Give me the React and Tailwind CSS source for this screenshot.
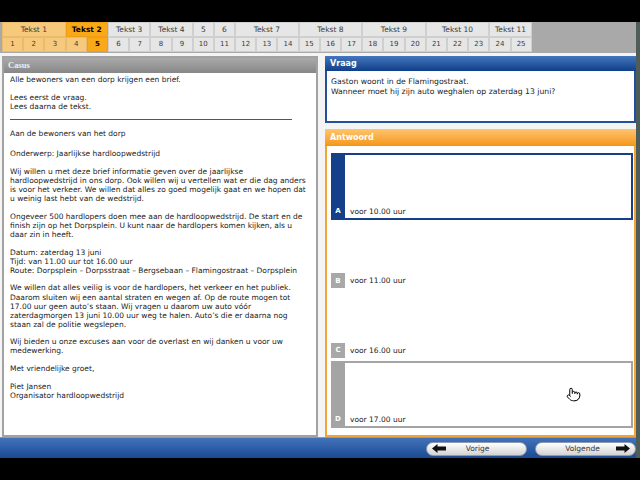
import React from "react";
import { Pointer } from "lucide-react";

const sans = "font-['DejaVu_Sans',Verdana,sans-serif]";

const groups = [
  { label: "Tekst 1", span: 3, tone: "done" },
  { label: "Tekst 2", span: 2, tone: "active" },
  { label: "Tekst 3", span: 2 },
  { label: "Tekst 4", span: 2 },
  { label: "5", span: 1 },
  { label: "6", span: 1 },
  { label: "Tekst 7", span: 3 },
  { label: "Tekst 8", span: 3 },
  { label: "Tekst 9", span: 3 },
  { label: "Tekst 10", span: 3 },
  { label: "Tekst 11", span: 2 },
];

const spans = { 1: "col-span-1", 2: "col-span-2", 3: "col-span-3" };

const tones = {
  done: "bg-[#f6c97c] border-[#e9bb6c] text-[#3a3a3a]",
  active: "bg-[#f9a81a] border-[#eea014] text-black font-bold",
  idle: "bg-[#e6e6e6] border-[#cfcfcf] text-[#3a3a3a]",
};

const numTone = (n) => (n < 5 ? "done" : n === 5 ? "active" : "idle");

// letter text, line by line as in the picture
const casus = [
  ["Alle bewoners van een dorp krijgen een brief."],
  ["Lees eerst de vraag.", "Lees daarna de tekst."],
  "hr",
  ["Aan de bewoners van het dorp"],
  ["Onderwerp: Jaarlijkse hardloopwedstrijd"],
  [
    "Wij willen u met deze brief informatie geven over de jaarlijkse",
    "hardloopwedstrijd in ons dorp. Ook willen wij u vertellen wat er die dag anders",
    "is voor het verkeer. We willen dat alles zo goed mogelijk gaat en we hopen dat",
    "u weinig last hebt van de wedstrijd.",
  ],
  [
    "Ongeveer 500 hardlopers doen mee aan de hardloopwedstrijd. De start en de",
    "finish zijn op het Dorpsplein. U kunt naar de hardlopers komen kijken, als u",
    "daar zin in heeft.",
  ],
  [
    "Datum: zaterdag 13 juni",
    "Tijd: van 11.00 uur tot 16.00 uur",
    "Route: Dorpsplein – Dorpsstraat – Bergsebaan – Flamingostraat – Dorpsplein",
  ],
  [
    "We willen dat alles veilig is voor de hardlopers, het verkeer en het publiek.",
    "Daarom sluiten wij een aantal straten en wegen af. Op de route mogen tot",
    "17.00 uur geen auto’s staan. Wij vragen u daarom uw auto vóór",
    "zaterdagmorgen 13 juni 10.00 uur weg te halen. Auto’s die er daarna nog",
    "staan zal de politie wegslepen.",
  ],
  [
    "Wij bieden u onze excuses aan voor de overlast en wij danken u voor uw",
    "medewerking.",
  ],
  ["Met vriendelijke groet,"],
  ["Piet Jansen", "Organisator hardloopwedstrijd"],
];

const options = [
  { letter: "A", text: "voor 10.00 uur", state: "selected" },
  { letter: "B", text: "voor 11.00 uur" },
  { letter: "C", text: "voor 16.00 uur" },
  { letter: "D", text: "voor 17.00 uur", state: "hover" },
];

const Arrow = ({ flip }) => (
  <svg width="14" height="9" viewBox="0 0 14 9" className={flip ? "-scale-x-100" : ""}>
    <polygon points="0,4.5 5.5,0 5.5,2.6 14,2.6 14,6.4 5.5,6.4 5.5,9" fill="#111" />
  </svg>
);

const Option = ({ letter, text, state }) => {
  const framed = state === "selected" || state === "hover";
  const color = state === "selected" ? "border-[#163f89]" : state === "hover" ? "border-[#a4a4a4]" : "border-transparent";
  const strip = state === "selected" ? "bg-[#163f89]" : state === "hover" ? "bg-[#a4a4a4]" : "";
  return (
    <div className="relative flex h-[67px] shrink-0">
      <div className={`w-[14px] flex flex-col justify-end ${strip}`}>
        <div
          className={`h-[15px] mb-[1px] flex items-center justify-center text-[7px] font-bold text-white ${
            framed ? "" : "bg-[#a8a8a8]"
          }`}
        >
          {letter}
        </div>
      </div>
      <div className={`flex-1 flex items-end border-y-2 border-r-2 ${color} pl-[5px] pb-[1px]`}>
        <span className="text-[7.5px] leading-[10px] text-[#222]">{text}</span>
      </div>
      {state === "hover" && (
        <Pointer
          size={15}
          strokeWidth={1.6}
          fill="white"
          className="absolute left-[235px] top-[26px] text-black"
        />
      )}
    </div>
  );
};

export default function App() {
  return (
    <div className={`w-[640px] h-[480px] bg-black flex flex-col overflow-hidden ${sans}`}>
      <div className="h-[22px] shrink-0" />

      <div className="flex h-[436px] shrink-0">
        <div className="flex-1 flex flex-col">
          {/* Tabs */}
          <div className="h-[31px] shrink-0 bg-[#a9a9a9] pl-[2px]">
            <div className="grid grid-cols-[repeat(25,21.2px)] grid-rows-[15px_15px]">
              {groups.map((g) => (
                <div
                  key={g.label}
                  className={`${spans[g.span]} ${tones[g.tone || "idle"]} border flex items-center justify-center text-[7.5px]`}
                >
                  {g.label}
                </div>
              ))}
              {Array.from({ length: 25 }, (_, i) => i + 1).map((n) => (
                <div
                  key={n}
                  className={`${tones[numTone(n)]} border flex items-center justify-center text-[7px]`}
                >
                  {n}
                </div>
              ))}
            </div>
          </div>

          {/* Content */}
          <div className="flex-1 min-h-0 bg-[#f4f4f4] flex gap-[7px] pl-[2px] pt-[3px]">
            {/* Casus */}
            <div className="w-[316px] flex flex-col border-2 border-[#a2a2a2] bg-white">
              <div className="h-[15px] shrink-0 bg-gradient-to-b from-[#aaaaaa] to-[#878787] flex items-center pl-[4px]">
                <span className="font-['Liberation_Serif',serif] font-bold text-[8.5px] text-[#f0f0f0]">Casus</span>
              </div>
              <div className="flex-1 pl-[6px] pt-[2px] text-[7.5px] leading-[9.1px] text-[#222]">
                {casus.map((p, i) =>
                  p === "hr" ? (
                    <div key={i} className="w-[282px] h-px bg-[#555] mb-[9px]" />
                  ) : (
                    <div key={i} className={i === 3 ? "mb-[11px]" : "mb-[8.5px]"}>
                      {p.map((line) => (
                        <div key={line} className="whitespace-nowrap">{line}</div>
                      ))}
                    </div>
                  )
                )}
              </div>
            </div>

            {/* Right column */}
            <div className="flex-1 flex flex-col gap-[6px]">
              <div className="h-[67px] shrink-0 flex flex-col">
                <div className="h-[15px] shrink-0 bg-gradient-to-b from-[#4477bd] to-[#0f3f89] flex items-center pl-[5px]">
                  <span className="text-[8px] font-bold text-white">Vraag</span>
                </div>
                <div className="flex-1 bg-white border-x-2 border-b-2 border-[#24509a] pl-[4px] pt-[6px] text-[7.7px] leading-[10px] text-[#222]">
                  <div>Gaston woont in de Flamingostraat.</div>
                  <div>Wanneer moet hij zijn auto weghalen op zaterdag 13 juni?</div>
                </div>
              </div>

              <div className="flex-1 flex flex-col">
                <div className="h-[17px] shrink-0 bg-gradient-to-b from-[#ffc46a] to-[#f59600] flex items-center pl-[5px]">
                  <span className="text-[8px] font-bold text-white">Antwoord</span>
                </div>
                <div className="flex-1 bg-white border-x-2 border-b-2 border-[#f2a437] pl-[4px] pr-[1px] pt-[7px] flex flex-col gap-[2.3px]">
                  {options.map((o) => (
                    <Option key={o.letter} {...o} />
                  ))}
                </div>
              </div>
            </div>
          </div>

          {/* Bottom bar */}
          <div className="h-[21px] shrink-0 bg-gradient-to-b from-[#4173bb] to-[#1a4a92] border-t border-[#7a9dd0] flex items-center justify-end gap-[8px] pt-[1px]">
            <button className="w-[101px] h-[14px] rounded-full bg-gradient-to-b from-white to-[#d3d3d3] border border-[#8d9bb0] flex items-center px-[5px]">
              <Arrow />
              <span className="flex-1 text-center text-[7.5px] text-[#333] pr-[12px]">Vorige</span>
            </button>
            <button className="w-[101px] h-[14px] rounded-full bg-gradient-to-b from-white to-[#d3d3d3] border border-[#8d9bb0] flex items-center px-[5px]">
              <span className="flex-1 text-center text-[7.5px] text-[#333] pl-[8px]">Volgende</span>
              <Arrow flip />
            </button>
          </div>
        </div>
        <div className="w-[4px] bg-[#4e5d57]" />
      </div>

      <div className="flex-1" />
    </div>
  );
}
